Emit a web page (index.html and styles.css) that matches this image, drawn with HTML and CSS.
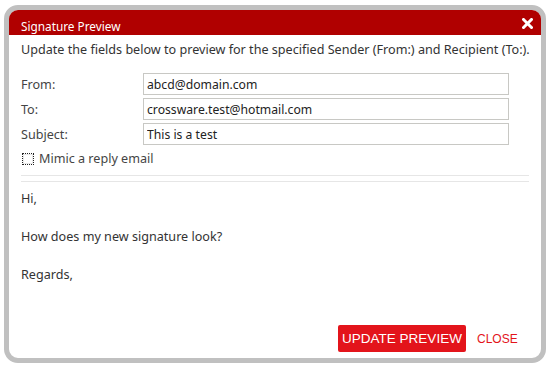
FILE: index.html
```html
<!doctype html>
<html lang="en">
  <head>
    <meta charset="UTF-8" />
    <title>Signature Preview</title>
    <link rel="stylesheet" href="styles.css">
  </head>

  <body>
    <div class="dialog">
      <div class="dialog-header">
        <span class="dialog-title">Signature Preview</span>
        <button type="button" class="dialog-close" aria-label="Close">
          <svg width="11" height="11" viewBox="0 0 11 11">
            <path d="M1.5 1.5 L9.5 9.5 M9.5 1.5 L1.5 9.5" stroke="#fff" stroke-width="3" stroke-linecap="square" fill="none" />
          </svg>
        </button>
      </div>

      <div class="dialog-body">
        <p class="intro">Update the fields below to preview for the specified Sender (From:) and Recipient (To:).</p>

        <form class="fields">
          <div class="field">
            <label for="from">From:</label>
            <input type="text" id="from" value="abcd@domain.com" />
          </div>
          <div class="field">
            <label for="to">To:</label>
            <input type="text" id="to" value="crossware.test@hotmail.com" />
          </div>
          <div class="field">
            <label for="subject">Subject:</label>
            <input type="text" id="subject" value="This is a test" />
          </div>
          <label class="mimic">
            <span class="check"></span>
            Mimic a reply email
          </label>
        </form>

        <div class="divider"></div>

        <div class="preview">
          <p>Hi,</p>
          <p>How does my new signature look?</p>
          <p>Regards,</p>
        </div>
      </div>

      <div class="dialog-footer">
        <button type="button" class="btn-update">UPDATE PREVIEW</button>
        <button type="button" class="btn-close">CLOSE</button>
      </div>
    </div>
  </body>
</html>
```

FILE: styles.css
```css
* {
  margin: 0;
  padding: 0;
  box-sizing: border-box;
}

body {
  background-color: #fff;
  font-family: 'Noto Sans', sans-serif;
  font-size: 12.6px;
  color: #333;
}

.dialog {
  display: flex;
  flex-direction: column;
  width: 542px;
  height: 358px;
  margin: 5px 0 0 4px;
  border: 5px solid #c0c0c0;
  border-radius: 14px;
  overflow: hidden;
  background-color: #fff;
}

.dialog-header {
  display: flex;
  align-items: center;
  justify-content: space-between;
  height: 25px;
  padding: 0 8px 0 12px;
  background-color: #b00000;
  color: #fff;
}

.dialog-title {
  font-size: 11.8px;
  padding-top: 7px;
}

.dialog-close {
  display: flex;
  background: none;
  border: none;
  cursor: pointer;
  margin-top: 2px;
}

.dialog-body {
  padding: 5px 12px 0 12px;
}

.intro {
  line-height: 19px;
  white-space: nowrap;
}

.fields {
  margin-top: 14px;
}

.field {
  display: flex;
  align-items: center;
  margin-bottom: 3px;
}

.field label {
  width: 122px;
  color: #444;
}

.field input {
  width: 366px;
  height: 22px;
  padding: 0 3px;
  border: 1px solid #c8c8c4;
  font-family: 'Noto Sans', sans-serif;
  font-size: 12.2px;
  color: #222;
}

.mimic {
  display: flex;
  align-items: center;
  gap: 5px;
  margin-top: 4px;
  padding-left: 1px;
  line-height: 19px;
  color: #444;
}

.check {
  width: 12px;
  height: 12px;
  border: 1px dotted #222;
  box-shadow: inset 0 0 0 1px #e8e8e8;
  background-color: #fff;
}

.divider {
  height: 7px;
  margin-top: 7px;
  border-top: 1px solid #e6e6e6;
  border-bottom: 1px solid #e6e6e6;
}

.preview {
  margin-top: 7px;
}

.preview p {
  line-height: 19px;
  margin-bottom: 19px;
}

.dialog-footer {
  display: flex;
  align-items: center;
  margin-top: auto;
  padding: 0 0 6px 329px;
}

.btn-update {
  width: 128px;
  height: 27px;
  border: none;
  border-radius: 2px;
  background-color: #e3141b;
  color: #fff;
  font-family: 'Liberation Sans', sans-serif;
  font-size: 13.5px;
  white-space: nowrap;
  cursor: pointer;
}

.btn-close {
  margin-left: 11px;
  background: none;
  border: none;
  color: #e3141b;
  font-family: 'Liberation Sans', sans-serif;
  font-size: 12px;
  cursor: pointer;
}
```
